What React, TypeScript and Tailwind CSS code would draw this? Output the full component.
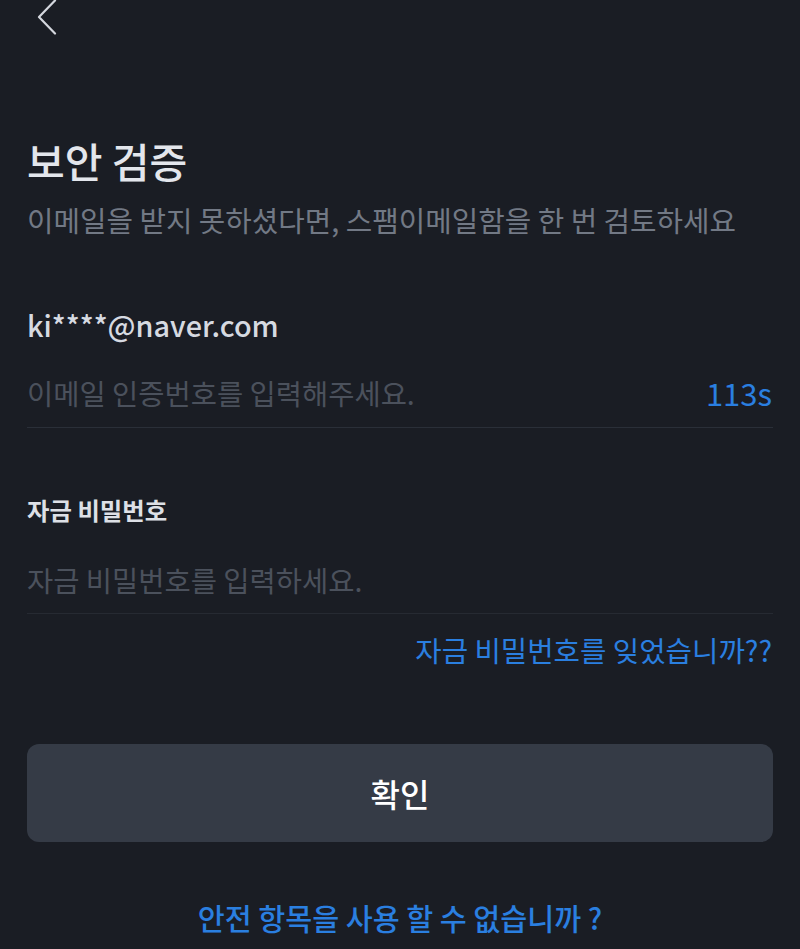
export default function App() {
  const font = { fontFamily: '"Noto Sans CJK KR", "Noto Sans", sans-serif' };
  return (
    <div className="min-h-[949px] w-full bg-[#1a1d24] px-[27px] text-[#e1e4ea] overflow-hidden" style={font}>
      <div className="h-[34px] flex items-start">
        <svg width="24" height="35" viewBox="0 0 24 35" className="ml-[10px]">
          <path d="M18 0.5 L2 17 L18 33.5" fill="none" stroke="#d4d7de" strokeWidth="2.2" strokeLinecap="round" strokeLinejoin="round" />
        </svg>
      </div>

      <h1 className="mt-[99px] text-[41px] leading-[54px] font-medium text-[#e3e6ec]">보안 검증</h1>
      <p className="mt-[13px] text-[28.8px] leading-[40px] text-[#727985] whitespace-nowrap">
        이메일을 받지 못하셨다면, 스팸이메일함을 한 번 검토하세요
      </p>

      <div className="mt-[65px] text-[28.8px] leading-[40px] font-medium text-[#d6dae1]">ki****@naver.com</div>
      <div className="mt-[28px] flex items-center justify-between border-b border-[#2a2f38] pb-[14px]">
        <span className="text-[28.5px] leading-[40px] text-[#4b515c]">이메일 인증번호를 입력해주세요.</span>
        <span className="text-[31px] leading-[40px] text-[#2a7fe0] mr-[1px]">113s</span>
      </div>

      <div className="mt-[64px] text-[24.4px] leading-[36px] font-bold text-[#dde0e6]">자금 비밀번호</div>
      <div className="mt-[32px] border-b border-[#262a32] pb-[13px]">
        <span className="text-[28.5px] leading-[40px] text-[#4b515c]">자금 비밀번호를 입력하세요.</span>
      </div>
      <div className="mt-[16px] flex justify-end">
        <span className="text-[28.7px] leading-[40px] text-[#2a7fe0] mr-[1px]">자금 비밀번호를 잊었습니까??</span>
      </div>

      <button className="mt-[74px] w-full h-[98px] rounded-[12px] bg-[#353b46] text-[32px] font-medium text-white">
        확인
      </button>

      <div className="mt-[55px] text-center text-[29.3px] leading-[40px] font-medium text-[#2a7fe0]">
        안전 항목을 사용 할 수 없습니까 ?
      </div>
    </div>
  );
}
